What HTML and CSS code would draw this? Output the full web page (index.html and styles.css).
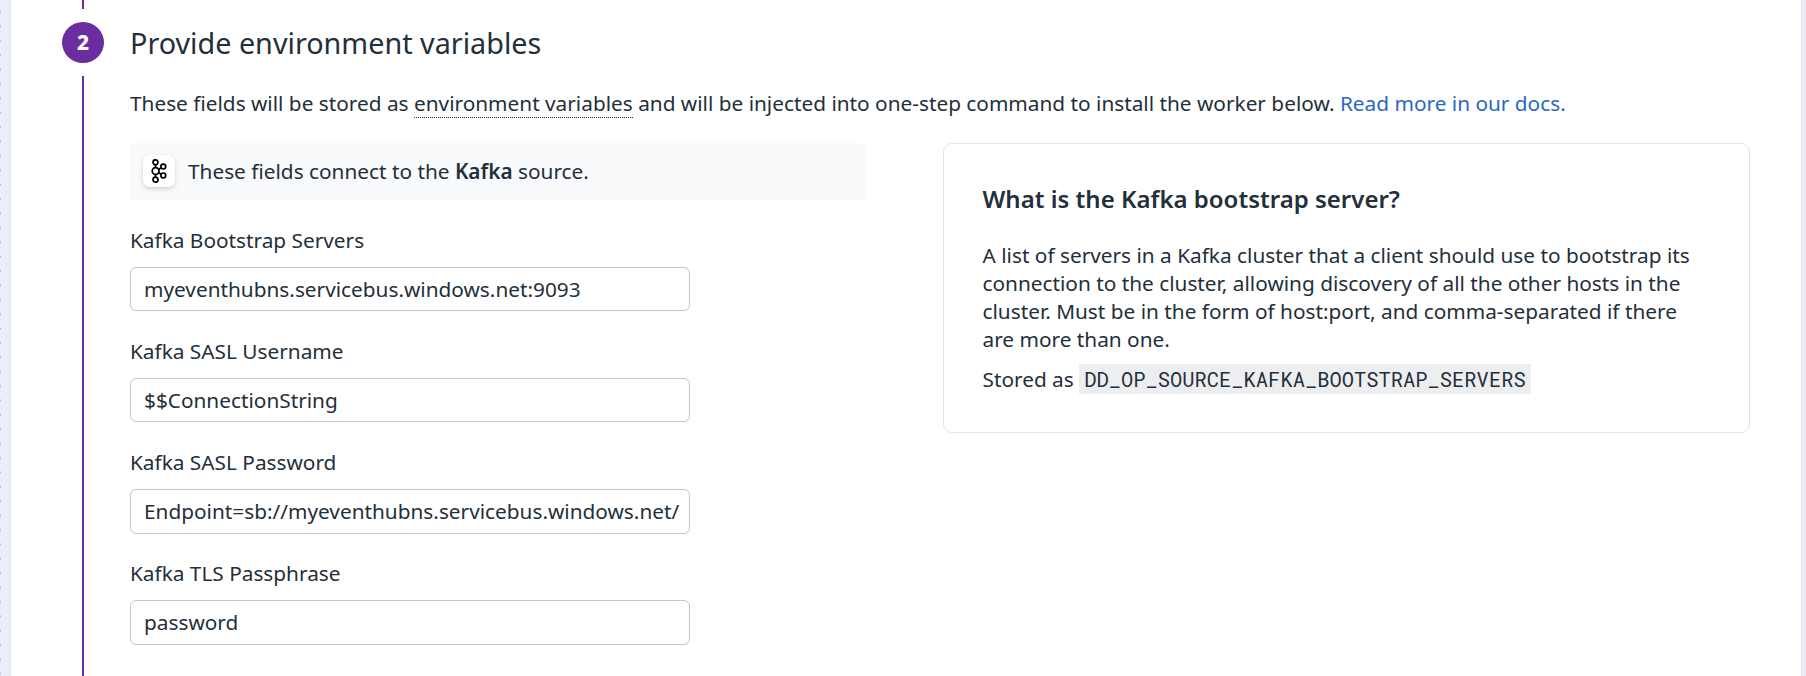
FILE: index.html
```html
<!DOCTYPE html>
<html lang="en">
<head>
<meta charset="utf-8">
<title>Provide environment variables</title>
<link rel="stylesheet" href="styles.css">
</head>
<body>
<div class="canvas">
  <main class="sheet">
    <aside class="rail">
      <div class="rail-line rail-line-top"></div>
      <div class="step-badge">2</div>
      <div class="rail-line rail-line-rest"></div>
    </aside>
    <section class="step">
      <h2 class="title"><span>Provide environment variables</span></h2>
      <p class="intro"><span>These fields will be stored as <span class="term">environment variables</span> and will be injected into one-step command to install the worker below. <a class="link">Read more in our docs.</a></span></p>
      <div class="columns">
        <div class="form">
          <div class="notice">
            <div class="kafka-tile">
              <svg width="16" height="24" viewBox="0 0 16 24" fill="none" stroke="#000" stroke-width="1.7">
                <circle cx="4.5" cy="3.3" r="2.5"/>
                <circle cx="4.6" cy="12" r="3.4"/>
                <circle cx="4.5" cy="20.7" r="2.5"/>
                <circle cx="12.3" cy="7.6" r="2.4"/>
                <circle cx="12.3" cy="16.4" r="2.4"/>
                <path d="M4.5 5.8v2.8M4.5 15.4v2.8M7.5 10.4l2.7-1.6M7.5 13.6l2.7 1.6"/>
              </svg>
            </div>
            <span>These fields connect to the <b>Kafka</b> source.</span>
          </div>
          <label class="field"><span>Kafka Bootstrap Servers</span><input type="text" value="myeventhubns.servicebus.windows.net:9093"></label>
          <label class="field"><span>Kafka SASL Username</span><input type="text" value="$$ConnectionString"></label>
          <label class="field"><span>Kafka SASL Password</span><input type="text" value="Endpoint=sb://myeventhubns.servicebus.windows.net/"></label>
          <label class="field"><span>Kafka TLS Passphrase</span><input type="text" value="password"></label>
        </div>
        <div class="card">
          <h3>What is the Kafka bootstrap server?</h3>
          <p>A list of servers in a Kafka cluster that a client should use to bootstrap its<br>connection to the cluster, allowing discovery of all the other hosts in the<br>cluster. Must be in the form of host:port, and comma-separated if there<br>are more than one.</p>
          <div class="stored">Stored as <code>DD_OP_SOURCE_KAFKA_BOOTSTRAP_SERVERS</code></div>
        </div>
      </div>
    </section>
  </main>
</div>
</body>
</html>
```
FILE: styles.css
```css
* { box-sizing: border-box; }
body {
  margin: 0;
  overflow: hidden;
  font: 20.8px/28px "Noto Sans", sans-serif;
  color: #232f3a;
}
h2, h3, p { margin: 0; font-weight: 400; }
.canvas {
  height: 676px;
  padding: 0 4px 0 10px;
  background: radial-gradient(circle at 0 7.2px, #b3b5bb 0.8px, transparent 1.3px) 0 4.7px / 14.4px 14.4px repeat-y #ebeef7;
}
.sheet {
  display: flex;
  height: 676px;
  border: solid #dfe2ec;
  border-width: 0 1px;
  background: #fff;
}
.rail {
  display: flex;
  flex-direction: column;
  align-items: center;
  width: 42px;
  margin-left: 51px;
}
.rail-line { width: 2px; background: #6b2c9f; }
.rail-line-top { height: 9px; }
.rail-line-rest { flex: 1; }
.step-badge {
  width: 42px;
  height: 41px;
  margin: 13px 0;
  border-radius: 50%;
  background: #6b2c9f;
  color: #fff;
  font-weight: 800;
  line-height: 41px;
  text-align: center;
}
.step { width: 1620px; margin-left: 26px; white-space: nowrap; }
.title { padding-top: 23px; font-size: 28.75px; line-height: 40px; }
.intro { margin-top: 26px; }
.term { border-bottom: 1px dotted #232f3a; }
.link { color: #2a68c4; }
.columns {
  display: flex;
  justify-content: space-between;
  align-items: flex-start;
  margin-top: 26px;
}
.form { width: 736px; }
.notice {
  display: flex;
  align-items: center;
  gap: 13px;
  height: 57px;
  padding: 0 0 1px 13px;
  border-radius: 6px;
  background: #f9fafc;
}
.notice b { font-weight: 600; }
.kafka-tile {
  display: grid;
  place-items: center;
  width: 32px;
  height: 32px;
  border-radius: 7px;
  background: #fff;
  box-shadow: 0 2px 5px rgba(0, 0, 0, 0.16);
}
.field { display: block; height: 111.1px; }
.notice + .field { margin-top: 26px; }
.field span { display: block; }
.field input {
  display: block;
  width: 560px;
  height: 44.4px;
  margin-top: 13px;
  padding: 0 9px 0 13px;
  border: 1px solid #c1c5dc;
  border-radius: 6px;
  background: #fff;
  color: inherit;
  font: inherit;
}
.card {
  width: 807px;
  height: 290px;
  padding: 39px 38.5px;
  border: 1px solid #e2e4ec;
  border-radius: 9px;
}
.card h3 { font-size: 24px; font-weight: 600; line-height: 32px; }
.card p { margin-top: 26px; }
.stored { margin-top: 11px; }
.stored code {
  display: inline-block;
  height: 30px;
  padding: 0 5px;
  background: #edeef0;
  font: 20.45px/32px "Roboto Mono", "DejaVu Sans Mono", monospace;
}
```
